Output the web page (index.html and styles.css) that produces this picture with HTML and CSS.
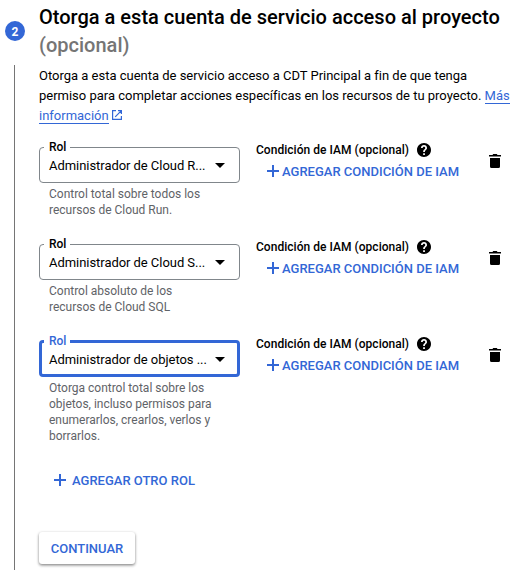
FILE: index.html
```html
<!DOCTYPE html>
<html lang="es">
<head>
<meta charset="utf-8">
<title>Cuenta de servicio</title>
<link rel="stylesheet" href="styles.css">
</head>
<body>
<svg width="0" height="0" class="defs">
  <symbol id="plus" viewBox="0 0 12 12"><path d="M5 0h2v5h5v2H7v5H5V7H0V5h5z"/></symbol>
  <symbol id="trash" viewBox="0 0 12 14"><path d="M1 4h10v8.500a1.500 1.500 0 0 1-1.500 1.500h-7A1.500 1.500 0 0 1 1 12.500zM0 1h3.500l.7-1h3.600l.7 1H12v1.600H0z"/></symbol>
  <symbol id="help" viewBox="2 2 20 20"><path d="M12 2C6.480 2 2 6.480 2 12s4.480 10 10 10 10-4.480 10-10S17.520 2 12 2zm1.300 17h-2.500v-2.500h2.500V19zm2-7.700-.9.900c-.7.700-1.100 1.300-1.100 2.800h-2.500v-.5c0-1.100.4-2.100 1.200-2.800l1.200-1.300c.4-.3.600-.8.600-1.400 0-1.100-.7-1.800-1.800-1.800s-1.800.7-1.800 1.800H7.700C7.700 6.600 9.600 4.800 12 4.800s4.300 1.800 4.300 4.200c0 .9-.4 1.700-1 2.300z"/></symbol>
</svg>
<main class="stepper">
  <div class="rail"><span class="badge">2</span><span class="line"></span></div>
  <section class="step">
    <h2 class="title">Otorga a esta cuenta de servicio acceso al proyecto <span class="optional">(opcional)</span></h2>
    <p class="intro">Otorga a esta cuenta de servicio acceso a CDT Principal a fin de que tenga<br>permiso para completar acciones específicas en los recursos de tu proyecto. <a class="link">Más</a><br><a class="link">información</a><svg class="external" viewBox="0 0 10 10"><path d="M4 .6H.6v8.800h8.800V6M6 .6h3.400V4M9.400.6 3.200 6.800"/></svg></p>
    <div class="roles">
      <div class="role">
        <div class="picker">
          <fieldset class="select"><legend>Rol</legend><span class="value">Administrador de Cloud R...</span><span class="arrow"></span></fieldset>
          <p class="hint">Control total sobre todos los<br>recursos de Cloud Run.</p>
        </div>
        <div class="condition">
          <div class="cond-label"><span>Condición de IAM (opcional)</span><svg class="help"><use href="#help"/></svg></div>
          <div class="add"><svg class="plus"><use href="#plus"/></svg><span>AGREGAR CONDICIÓN DE IAM</span></div>
        </div>
        <svg class="trash"><use href="#trash"/></svg>
      </div>
      <div class="role">
        <div class="picker">
          <fieldset class="select"><legend>Rol</legend><span class="value">Administrador de Cloud S...</span><span class="arrow"></span></fieldset>
          <p class="hint">Control absoluto de los<br>recursos de Cloud SQL</p>
        </div>
        <div class="condition">
          <div class="cond-label"><span>Condición de IAM (opcional)</span><svg class="help"><use href="#help"/></svg></div>
          <div class="add"><svg class="plus"><use href="#plus"/></svg><span>AGREGAR CONDICIÓN DE IAM</span></div>
        </div>
        <svg class="trash"><use href="#trash"/></svg>
      </div>
      <div class="role last">
        <div class="picker">
          <fieldset class="select focused"><legend>Rol</legend><span class="value">Administrador de objetos ...</span><span class="arrow"></span></fieldset>
          <p class="hint">Otorga control total sobre los<br>objetos, incluso permisos para<br>enumerarlos, crearlos, verlos y<br>borrarlos.</p>
        </div>
        <div class="condition">
          <div class="cond-label"><span>Condición de IAM (opcional)</span><svg class="help"><use href="#help"/></svg></div>
          <div class="add"><svg class="plus"><use href="#plus"/></svg><span>AGREGAR CONDICIÓN DE IAM</span></div>
        </div>
        <svg class="trash"><use href="#trash"/></svg>
      </div>
    </div>
    <div class="add another"><svg class="plus"><use href="#plus"/></svg><span>AGREGAR OTRO ROL</span></div>
    <button class="continue">CONTINUAR</button>
  </section>
</main>
</body>
</html>
```
FILE: styles.css
```css
* { box-sizing: border-box; }
body { margin: 0; background: #fff; color: #000; font-family: Roboto, sans-serif; font-size: 13px; overflow: hidden; }
h2, p { margin: 0; }
.defs { display: none; }
.stepper { display: flex; height: 570px; }
.rail { width: 39px; padding: 21px 0 0 5px; display: flex; flex-direction: column; }
.badge { width: 20px; height: 20px; flex: none; border-radius: 50%; background: #3367d6; color: #fff; font-size: 12px; font-weight: 700; line-height: 22px; text-align: center; }
.line { flex: 1; width: 1px; margin: 24px 0 0 9px; background: #757575; }
.step { width: 484px; padding-top: 3px; }
.title { width: 470px; font-size: 20px; font-weight: 500; line-height: 28px; letter-spacing: .01px; }
.optional { color: #757575; }
.intro { margin-top: 7px; line-height: 20px; white-space: nowrap; letter-spacing: -.008px; }
.link { color: #3367d6; border-bottom: 1px solid #3367d6; }
.external { width: 10px; height: 10px; margin-left: 3px; fill: none; stroke: #3367d6; stroke-width: 1.2; }
.roles { padding-top: 14px; }
.role { display: flex; height: 97px; align-items: flex-start; }
.role.last { height: 121px; }
.picker { width: 201px; }
.select { display: flex; align-items: center; margin: 0; height: 43px; padding: 0 14px 5px 9px; border: 1px solid #80868b; border-radius: 4px; min-width: 0; }
.select legend { padding: 0 4px 0 5px; margin-left: -5px; height: 14px; line-height: 14px; font-size: 12px; font-weight: 500; }
.value { flex: 1; white-space: nowrap; line-height: 18px; letter-spacing: -.05px; }
.arrow { border: 5px solid transparent; border-top-color: #000; border-bottom: 0; }
.focused { border: 3px solid #3367d6; padding: 0 12px 3px 7px; }
.focused legend { color: #3367d6; }
.hint { padding: 3px 0 0 10px; color: #5f6368; font-size: 12px; line-height: 16px; white-space: nowrap; letter-spacing: -.01px; }
.condition { width: 233px; margin-left: 16px; padding-top: 2px; }
.cond-label { display: flex; align-items: center; gap: 8px; height: 16px; font-size: 12px; font-weight: 500; letter-spacing: .03px; }
.help { width: 14px; height: 14px; }
.add { display: flex; align-items: center; gap: 3px; height: 16px; color: #3367d6; fill: #3367d6; font-weight: 500; white-space: nowrap; }
.condition .add { margin: 5px 0 0 11px; }
.plus { width: 12px; height: 12px; }
.trash { width: 12px; height: 14px; margin-top: 14px; }
.another { gap: 6px; margin: 17px 0 0 15px; }
.continue { display: block; width: 96px; height: 32px; margin-top: 44px; padding: 1px 0 0; border: 0; border-radius: 3px; background: #fff; color: #3367d6; font: 500 13px/31px Roboto, sans-serif; box-shadow: 0 1px 3px rgba(0,0,0,.4), 0 2px 3px rgba(0,0,0,.14); }
```
